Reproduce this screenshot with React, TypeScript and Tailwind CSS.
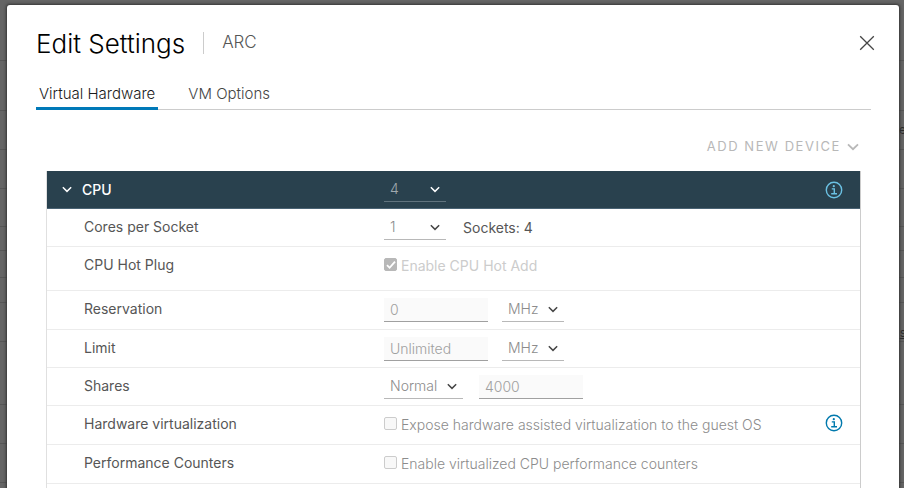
import type { ReactNode } from "react";

function Chevron({ className = "", size = "h-[7px] w-2.5" }: { className?: string; size?: string }) {
  return (
    <svg viewBox="0 0 12 8" fill="none" stroke="currentColor" strokeWidth="1.8" className={`pointer-events-none ${size} ${className}`} aria-hidden="true">
      <path d="M1 1.300 6 6.200l5-4.900" />
    </svg>
  );
}

function InfoButton({ className }: { className: string }) {
  return (
    <button type="button" aria-label="More information" className={className}>
      <svg viewBox="0 0 18 18" fill="none" stroke="currentColor" strokeWidth="1.400" className="size-[18px]">
        <circle cx="9" cy="9" r="7.700" />
        <path d="M6.800 7.900h2.500v4.700M6.200 12.700h5.800" />
        <circle cx="8.800" cy="5.200" r="1.100" fill="currentColor" stroke="none" />
      </svg>
    </button>
  );
}

function Select({ label, options, width, tone = "border-[#b8b8b8] text-[#8c8c8c]", arrow = "text-[#454545]" }: { label: string; options: string[]; width: string; tone?: string; arrow?: string }) {
  return (
    <span className={`grid items-center ${width}`}>
      <select aria-label={label} className={`col-start-1 row-start-1 h-6 w-full appearance-none border-b bg-transparent pl-1.5 text-sm font-light outline-none ${tone}`}>
        {options.map((o) => (
          <option key={o}>{o}</option>
        ))}
      </select>
      <Chevron className={`col-start-1 row-start-1 mr-1.5 justify-self-end ${arrow}`} />
    </span>
  );
}

function NumberBox({ label, value, placeholder }: { label: string; value?: string; placeholder?: string }) {
  return (
    <input
      aria-label={label}
      defaultValue={value}
      placeholder={placeholder}
      disabled
      className="h-6 w-[104px] border-b border-[#a0a0a0] bg-[#fafafa] px-1.5 text-sm font-light text-[#a0a0a0] placeholder:text-[#a0a0a0]"
    />
  );
}

function Check({ label, checked = false, tone }: { label: string; checked?: boolean; tone: string }) {
  return (
    <label className={`flex items-center gap-1 text-sm ${tone}`}>
      <span className="grid place-items-center pb-0.5">
        <input
          type="checkbox"
          defaultChecked={checked}
          disabled
          className="peer col-start-1 row-start-1 size-[13px] appearance-none rounded-xs border border-[#cccccc] bg-[#f8f8f8] checked:border-[#b8b8b8] checked:bg-[#b8b8b8]"
        />
        <svg viewBox="0 0 12 12" fill="none" stroke="white" strokeWidth="1.800" className="invisible col-start-1 row-start-1 size-3 peer-checked:visible" aria-hidden="true">
          <path d="m2 6.200 2.600 2.600L10 2.600" />
        </svg>
      </span>
      {label}
    </label>
  );
}

function Row({ name, height = "h-[38px]", children, info = false }: { name: string; height?: string; children: ReactNode; info?: boolean }) {
  return (
    <div className={`flex border-b border-[#ececec] ${height}`}>
      <div className="w-[337px] shrink-0 pt-2 pl-[37px] text-sm text-[#565656]">{name}</div>
      <div className="flex h-[37px] grow items-center">{children}</div>
      {info && <InfoButton className="mr-[17px] mb-1 text-[#0079ad]" />}
    </div>
  );
}

/* The dimmed page that shows round the dialog. */
function Backdrop() {
  return (
    <div aria-hidden="true" className="absolute inset-0 flex flex-col overflow-hidden bg-[#656565] text-xs text-[#2b2b2b] *:shrink-0 *:border-b *:border-[#565656]">
      <div className="h-[61px]" />
      <div className="h-[50px]" />
      <div className="flex h-[39px] items-center justify-end">
        <span className="-mr-0.5">e</span>
      </div>
      <div className="h-[39px]" />
      <div className="h-[38px]" />
      <div className="h-6" />
      <div className="h-[27px]" />
      <div className="h-[25px]" />
      <div className="flex h-[39px] items-end justify-end">
        <span className="-mr-0.5 underline">s</span>
      </div>
      <div className="h-[63px]" />
      <div className="h-[39px]" />
      <div className="h-[39px]" />
    </div>
  );
}

export default function App() {
  return (
    <div className="relative h-screen overflow-hidden pt-[5px] pr-[5px] pl-[7px] font-['Inter','Liberation_Sans',sans-serif]">
      <Backdrop />
      <main role="dialog" aria-labelledby="title" className="relative min-h-full rounded-t-[3px] bg-white pr-[28px] pl-[29px] shadow-[0_0_3px_1px_#333333]">
        <header className="flex h-[76px] items-center">
          <h1 id="title" className="text-[26px] font-light text-black">Edit Settings</h1>
          <span className="mx-[18px] h-[22px] w-px bg-[#cccccc]" />
          <span className="text-[17px] font-light text-[#565656]">ARC</span>
          <button type="button" aria-label="Close" className="-mr-1 ml-auto text-[#454545]">
            <svg viewBox="0 0 16 16" fill="none" stroke="currentColor" strokeWidth="1.300" className="size-4">
              <path d="m1.200 1.200 13.600 13.600M14.800 1.200 1.200 14.800" />
            </svg>
          </button>
        </header>
        <nav role="tablist" className="flex h-[29px] items-stretch gap-6 shadow-[inset_0_-1px_0_#cccccc]">
          <button type="button" role="tab" aria-selected="true" className="border-b-[3px] border-[#0079b8] px-[3px] text-[15px] font-light text-[#1a1a1a]">Virtual Hardware</button>
          <button type="button" role="tab" aria-selected="false" className="border-b-[3px] border-transparent px-[6px] text-[15px] font-light text-[#454545]">VM Options</button>
        </nav>
        <div className="flex h-[61px] items-center justify-end pt-3 pr-3">
          <button type="button" className="flex items-center gap-1.5 text-[13px] tracking-[0.12em] text-[#b8b8b8]">
            ADD NEW DEVICE
            <Chevron size="h-2 w-3" />
          </button>
        </div>
        <section className="mr-2.5 ml-2.5 border border-[#cccccc] border-t-0 border-l-[#e0e0e0]">
          <div className="flex h-[38px] items-center border-b border-[#4a6374] bg-[#29414e] text-white">
            <button type="button" aria-expanded="true" className="flex w-[337px] shrink-0 items-center gap-2.5 pl-[15px] text-sm font-medium">
              <Chevron />
              CPU
            </button>
            <div className="flex grow">
              <Select label="CPU" options={["4"]} width="w-[62px]" tone="border-[#60737e] text-[#a0a9ae]" arrow="text-white" />
            </div>
            <InfoButton className="mr-[17px] text-[#6bc1e3]" />
          </div>
          <Row name="Cores per Socket">
            <Select label="Cores per socket" options={["1"]} width="w-[62px]" />
            <span className="ml-[17px] text-sm text-[#565656]">Sockets: 4</span>
          </Row>
          <Row name="CPU Hot Plug" height="h-[44px]">
            <Check label="Enable CPU Hot Add" checked tone="text-[#cccccc]" />
          </Row>
          <Row name="Reservation" height="h-[39px]">
            <NumberBox label="Reservation" value="0" />
            <span className="w-3.5" />
            <Select label="Reservation unit" options={["MHz"]} width="w-[62px]" />
          </Row>
          <Row name="Limit">
            <NumberBox label="Limit" placeholder="Unlimited" />
            <span className="w-3.5" />
            <Select label="Limit unit" options={["MHz"]} width="w-[62px]" />
          </Row>
          <Row name="Shares">
            <Select label="Share level" options={["Normal"]} width="w-[79px]" />
            <span className="w-4" />
            <NumberBox label="Share count" value="4000" />
          </Row>
          <Row name="Hardware virtualization" height="h-[39px]" info>
            <Check label="Expose hardware assisted virtualization to the guest OS" tone="font-light text-[#8c8c8c]" />
          </Row>
          <Row name="Performance Counters" height="h-[39px]">
            <Check label="Enable virtualized CPU performance counters" tone="font-light text-[#8c8c8c]" />
          </Row>
          <div className="h-9" />
        </section>
      </main>
    </div>
  );
}
